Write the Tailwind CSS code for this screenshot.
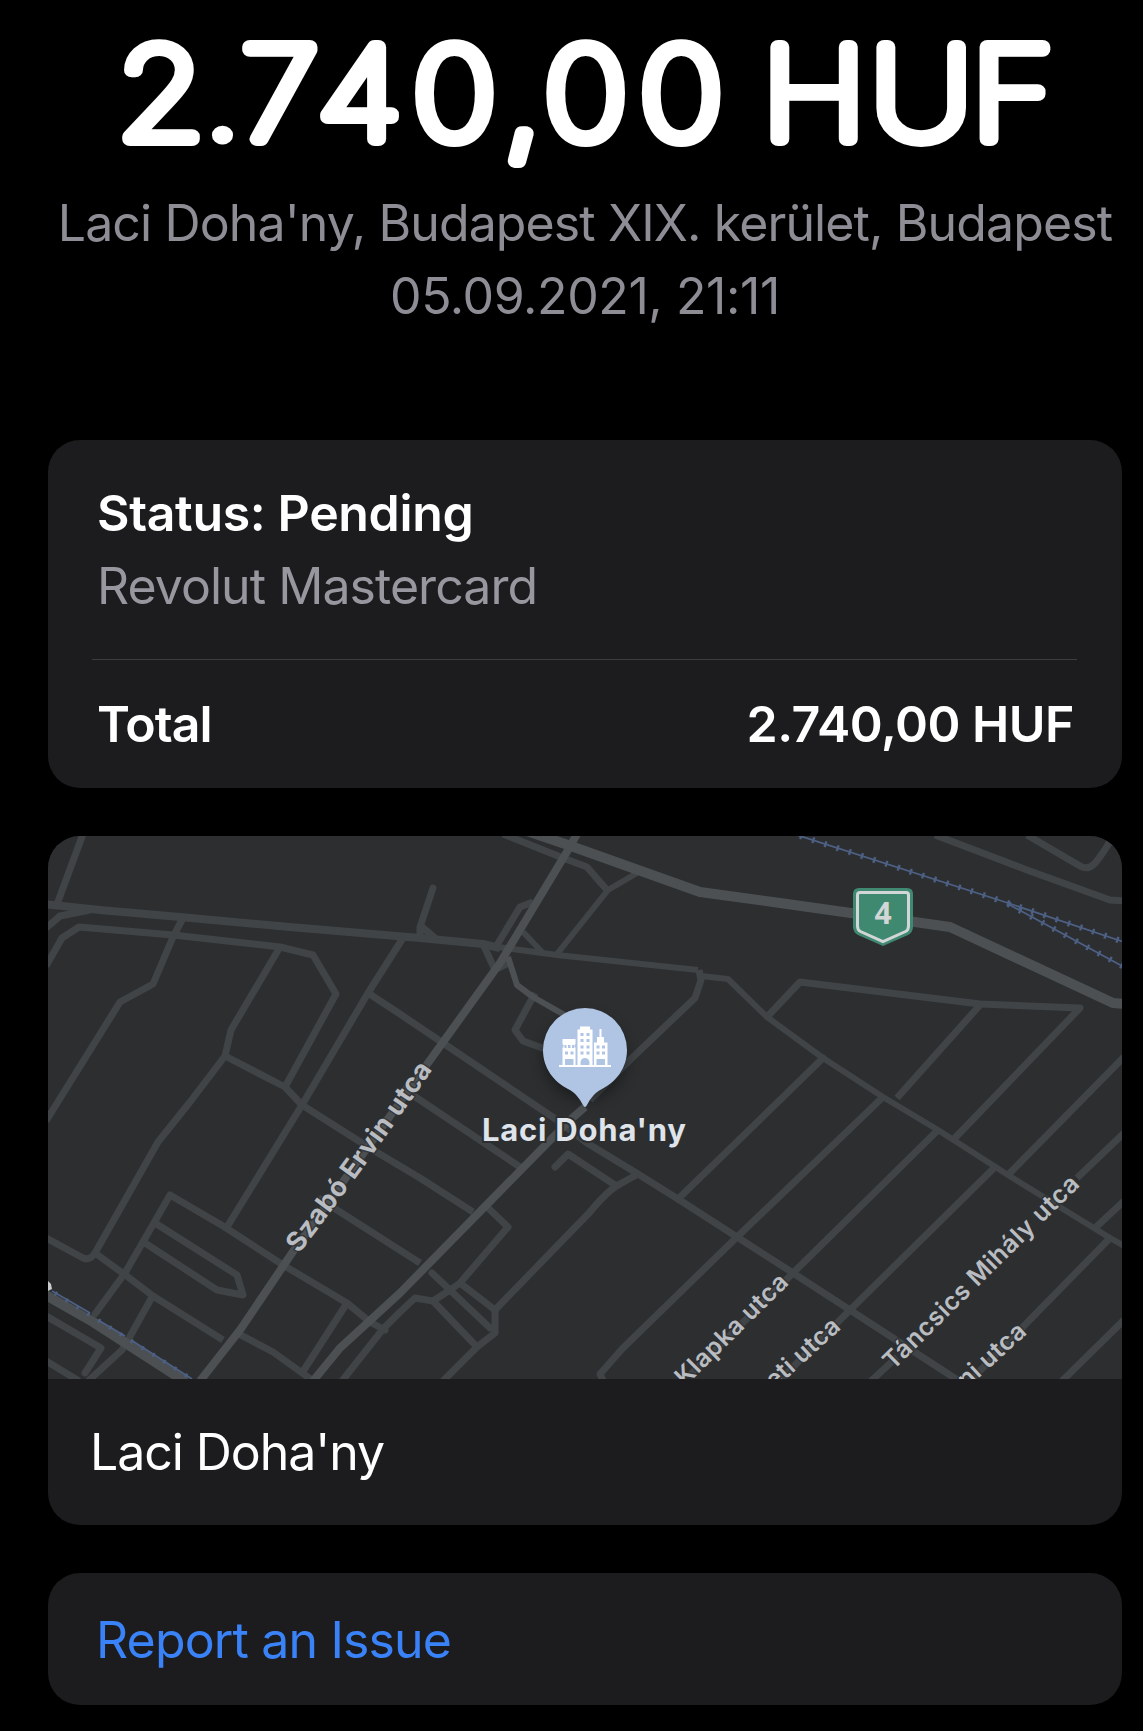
<!doctype html>
<html lang="en">

<head>
    <meta charset="UTF-8">
    <meta name="viewport" content="width=device-width, initial-scale=1.0">
    <title>Transaction</title>
    <script src="https://cdn.jsdelivr.net/npm/@tailwindcss/browser@4"></script>
</head>

<body class="min-h-screen bg-black pl-12 pr-[21px] font-['Inter',sans-serif] text-[50px] leading-[73px] text-white">
    <!-- Amount and merchant -->
    <header class="flex flex-col items-center text-[#8e8d95] whitespace-nowrap pb-[107px]">
        <h1 class="w-full h-[187px]">
            <!-- Thin face with a round stroke gives the rounded numerals -->
            <svg viewBox="48 0 1074 187" class="w-full h-full font-thin text-[126px]" fill="#fff" stroke="#fff"
                stroke-width="14" stroke-linejoin="round">
                <text transform="translate(0 139) scale(1.12 1)" y="0"
                    x="104.500 181.300 215.500 283.500 368.600 450 485.700 570.900 640 680.600 777.200 867.500">2<tspan class="font-extralight" stroke-width="9">.</tspan>740<tspan dy="4">,</tspan><tspan dy="-4">00 HUF</tspan></text>
            </svg>
        </h1>
        <p class="tracking-[-0.88px]">Laci Doha'ny, Budapest XIX. kerület, Budapest</p>
        <p class="tracking-[-0.4px]">05.09.2021, 21:11</p>
    </header>

    <main class="flex flex-col gap-12">
        <!-- Status card -->
        <section class="h-[348px] rounded-[32px] bg-[#1c1c1e] pl-11 pr-[45px] pt-[37px]">
            <div class="pl-[5px] pb-9 border-b border-[#3d3d41]">
                <h2 class="font-semibold tracking-[-0.35px]">Status: Pending</h2>
                <p class="text-[#98979f] tracking-[-0.95px]">Revolut Mastercard</p>
            </div>
            <div class="flex items-center justify-between h-[129px] pl-[5px] pr-[3px] font-semibold">
                <span class="tracking-[-0.9px]">Total</span>
                <span class="tracking-[-0.5px]">2.740,00 HUF</span>
            </div>
        </section>

        <!-- Merchant location -->
        <section class="rounded-[32px] bg-[#1c1c1e] overflow-hidden">
            <svg viewBox="48 836 1074 543" class="block w-full h-[543px] bg-[#2c2e30]">
                <defs>
                    <path id="szabo" d="M299 1254 Q369 1162 433 1069" />
                    <path id="tancsics" d="M893 1371 L1084 1182" />
                    <filter id="shadow" x="-50%" y="-50%" width="200%" height="200%">
                        <feGaussianBlur stdDeviation="8" />
                    </filter>
                </defs>

                <!-- Minor streets -->
                <g fill="none" stroke="#404447" stroke-width="7" stroke-linejoin="round">
                    <path d="M83 834 56 907" />
                    <path d="M44 904 100 910 180 917 290 927 420 938 483 944 500 948" stroke-width="8" />
                    <path d="M498 947 557 955 698 970" stroke-width="6" />
                    <path d="M46 928 60 916 90 910" />
                    <path d="M46 966 62 938 79 927 173 935 280 947 313 955 336 994 285 1087" />
                    <path d="M183 918 173 937 153 984 120 1002 46 1121" />
                    <path d="M280 947 231 1030 225 1056 190 1102 158 1142 95 1253Q90 1261 83 1258L46 1238" />
                    <path d="M225 1056 285 1087 302 1105 373 1150 420 1178 473 1212" />
                    <path d="M403 938 368 993 302 1105 227 1227" />
                    <path d="M368 993 400 1014 443 1043 557 1120 587 1143 638 1174 678 1199 737 1237 793 1273 850 1310 959 1381" />
                    <path d="M402 1088 417 1098 520 1167" />
                    <path d="M318 1198 337 1210 420 1263" />
                    <path d="M95 1314 125 1273 170 1195 223 1226 283 1265 347 1303 370 1322 385 1330" stroke-linecap="round" />
                    <path d="M155 1223 237 1275 243 1295 217 1290 145 1243" />
                    <path d="M95 1253 124 1274 153 1296 223 1340M237 1333 273 1352 312 1380" />
                    <path d="M152 1297 128 1340 122 1350 88 1381" />
                    <path d="M347 1303 302 1373" />
                    <path d="M46 1316 101 1348 85 1373" stroke-linecap="round" />
                    <path d="M46 1361 79 1381" />
                    <path d="M342 1381 383 1329 400 1312 415 1298 433 1301 450 1290 460 1283 508 1227 487 1207" />
                    <path d="M432 1273 490 1328" stroke-linecap="round" />
                    <path d="M460 1283 495 1310 495 1333 477 1347 443 1381" />
                    <path d="M433 1301 477 1347" />
                    <path d="M495 1310 590 1212Q608 1190 620 1184L638 1174" />
                    <path d="M555 1167 568 1154 615 1185" stroke-linecap="round" />
                    <path d="M823 1058 780 1100 678 1199" stroke-linecap="round" />
                    <path d="M604 1383 600 1374 623 1348 737 1237 882 1098" />
                    <path d="M938 1130 793 1273 690 1375" />
                    <path d="M995 1167 850 1310 780 1380" />
                    <path d="M767 1017 800 982 980 1004 1080 1008 953 1140" />
                    <path d="M980 1005 897 1098" />
                    <path d="M1124 1057 1008 1175" />
                    <path d="M1124 1133 1077 1178M897 1357 871 1381" />
                    <path d="M1124 1201 1095 1228" />
                    <path d="M1110 1238 970 1381" />
                    <path d="M1124 1320 1062 1381" />
                    <path d="M699 970 701 980 695 998 633 1057 590 1100" />
                    <path d="M503 834 563 858 587 867 607 890" />
                    <path d="M637 873 608 890 557 954" stroke-width="6" />
                    <path d="M433 888 420 927 420 937M422 927 435 938" stroke-linecap="round" />
                    <path d="M533 902 520 907 497 945" />
                    <path d="M523 932 542 952" stroke-width="6" />
                    <path d="M483 944 495 970 510 962" />
                    <path d="M535 993 515 1030 523 1041 545 1049" />
                    <path d="M701 976 728 979 767 1017 823 1058 883 1097 938 1130 1008 1175 1110 1238 1126 1247" stroke-width="6" />
                    <path d="M935 835 1027 870 1110 900 1124 901" />
                    <path d="M1027 835 1080 866Q1087 870 1093 865T1112 838" />
                </g>

                <!-- Main roads -->
                <g fill="none" stroke="#4c5053" stroke-width="8" stroke-linejoin="round">
                    <path d="M577 834 568 850 500 963 428 1063 292 1253 240 1330 200 1381" />
                    <path d="M585 1107 570 1120 400 1293 340 1348 313 1381" />
                    <path d="M508 957 517 985 533 997 570 1018" stroke-width="6" />
                    <path d="M521 829 568 845 700 892 780 903 950 927 1113 1003 1124 1004" stroke-width="10" />
                    <path d="M44 1294 93 1322 186 1382" stroke-width="10" />
                </g>

                <!-- Railways -->
                <g fill="none" stroke="#4d6084">
                    <g stroke-width="1.8">
                        <path d="M797 835 1008 903 1124 942" />
                        <path d="M1008 904 1124 967" />
                        <path d="M52 1291 90 1313M98 1320 125 1336M131 1340 192 1379" />
                    </g>
                    <g stroke-width="6" stroke-dasharray="2.4 10.4">
                        <path d="M800 836 1008 903 1124 942" />
                        <path d="M1008 904 1124 967" />
                        <path d="M55 1293 192 1379" stroke-width="4" />
                    </g>
                </g>
                <path d="M48 1281 51 1284 52 1289 48 1291Z" fill="#c8cacd" />

                <!-- Street names -->
                <g fill="#b9bcc0" stroke="#2c2e30" stroke-width="3" stroke-opacity="0.7" paint-order="stroke"
                    class="font-semibold text-[25px]">
                    <text class="font-bold text-[27px]"><textPath href="#szabo" textLength="228">Szabó Ervin utca</textPath></text>
                    <text transform="translate(685 1387) rotate(-44.6)" textLength="147">Klapka utca</text>
                    <text transform="translate(842 1328) rotate(-42.500)" text-anchor="end" letter-spacing="0.3">eti utca</text>
                    <text><textPath href="#tancsics" textLength="264">Táncsics Mihály utca</textPath></text>
                    <text transform="translate(1028 1333) rotate(-42.500)" text-anchor="end" letter-spacing="0.3">ni utca</text>
                </g>

                <!-- Route shield -->
                <path d="M859 888h48q6 0 6 6v33q0 5-5 8l-25 11-25-11q-5-3-5-8v-33q0-6 6-6z" fill="#3f8970" />
                <path d="M860 892.500h46q2.500 0 2.500 2.500v31q0 4-3 5.500L883 941.500l-22.500-10q-3-1.500-3-5.500v-31q0-2.500 2.500-2.500z"
                    fill="none" stroke="#d3d6d6" stroke-width="3" />
                <text x="883" y="924" text-anchor="middle" fill="#d3d6d6" class="font-['Open_Sans'] font-bold text-[30px]">4</text>

                <!-- Merchant pin -->
                <path d="M585 1018a40 40 0 0 1 0 80 40 40 0 0 1 0-80z" fill="#000" opacity="0.45" filter="url(#shadow)" />
                <path d="M585 1008a42 42 0 0 1 42 42c0 18-11 32-25 39-8 4-11 9-15 16q-2 4-4 0c-4-7-7-12-15-16-14-7-25-21-25-39a42 42 0 0 1 42-42z"
                    fill="#b0c4e4" />
                <g fill="#fff">
                    <rect x="559" y="1065" width="52" height="2" />
                    <path d="M562.500 1039h13v5.500h-1v3h1V1066h-13v-18.500h1v-3h-1z" />
                    <path d="M577.500 1029.500h2.500v-3h10v3h2.500V1066h-15z" />
                    <path d="M594 1042.500h3v-5.500h2.500v-8h2v8h2.500v5.500h3.500V1066H594z" />
                </g>
                <g fill="#b0c4e4">
                    <path d="M564.500 1045h2v3h-2zM568 1045h2.500v3H568zM572 1045h2v3h-2zM565 1051.500h3v3h-3zM570.500 1051.500h3v3h-3zM565 1059h8.500v6H565z" />
                    <path d="M580.500 1033h3v3h-3zM586.500 1033h3v3h-3zM580.500 1039h3v3h-3zM586.500 1039h3v3h-3zM580.500 1045.500h3v3h-3zM586.500 1045.500h3v3h-3zM580.500 1051.500h3v3h-3zM586.500 1051.500h3v3h-3zM580.500 1065v-2.500a4.500 4.500 0 0 1 9 0v2.500z" />
                    <path d="M596.500 1045.500h3v3h-3zM602 1045.500h3v3h-3zM596.500 1051.500h3v3h-3zM602 1051.500h3v3h-3zM596.500 1059h8.500v6h-8.500z" />
                </g>
                <text x="482" y="1141" textLength="204" fill="#dfe3ea" stroke="#2c2e30" stroke-width="4" paint-order="stroke"
                    class="font-bold text-[31px]">Laci Doha'ny</text>
            </svg>
            <div class="flex items-center h-[146px] pl-[42px] tracking-[-1.05px]">Laci Doha'ny</div>
        </section>

        <!-- Help -->
        <section class="flex items-center h-[132px] rounded-[32px] bg-[#1c1c1e] pl-12 pt-0.5">
            <a href="#" class="text-[#3a82f7] tracking-[-0.85px]">Report an Issue</a>
        </section>
    </main>
</body>

</html>
